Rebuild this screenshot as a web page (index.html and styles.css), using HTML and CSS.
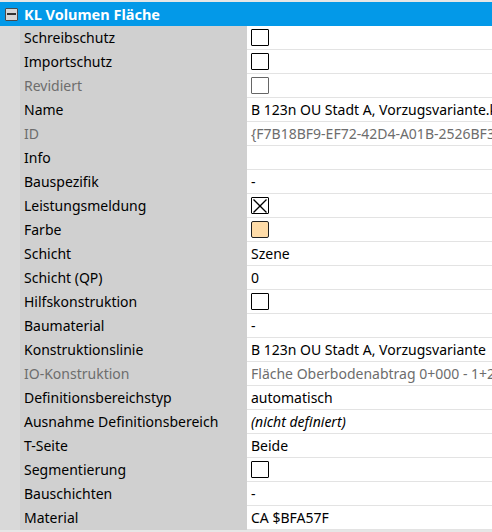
FILE: index.html
```html
<!DOCTYPE html>
<html lang="de">
<head>
<meta charset="utf-8">
<title>KL Volumen Fläche</title>
<link rel="stylesheet" href="styles.css">
</head>
<body>
<div class="grid">
  <div class="header">
    <span class="collapse"><span class="bar"></span></span>
    <span class="title">KL Volumen Fläche</span>
  </div>
  <div class="rows">
    <div class="row"><div class="gut"></div><div class="lab">Schreibschutz</div><div class="val"><span class="cb"></span></div></div>
    <div class="row"><div class="gut"></div><div class="lab">Importschutz</div><div class="val"><span class="cb"></span></div></div>
    <div class="row"><div class="gut"></div><div class="lab dim">Revidiert</div><div class="val"><span class="cb dimcb"></span></div></div>
    <div class="row"><div class="gut"></div><div class="lab">Name</div><div class="val"><span class="txt">B 123n OU Stadt A, Vorzugsvariante.km</span></div></div>
    <div class="row"><div class="gut"></div><div class="lab dim">ID</div><div class="val dim"><span class="txt">{F7B18BF9-EF72-42D4-A01B-2526BF3C91D0}</span></div></div>
    <div class="row"><div class="gut"></div><div class="lab">Info</div><div class="val"></div></div>
    <div class="row"><div class="gut"></div><div class="lab">Bauspezifik</div><div class="val"><span class="txt">-</span></div></div>
    <div class="row"><div class="gut"></div><div class="lab">Leistungsmeldung</div><div class="val"><span class="cb"><svg viewBox="0 0 14 14" width="14" height="14"><path d="M0.5 0.5 L13.5 13.5 M13.5 0.5 L0.5 13.5" stroke="#000" stroke-width="1.3" fill="none"/></svg></span></div></div>
    <div class="row"><div class="gut"></div><div class="lab">Farbe</div><div class="val"><span class="cb swatch"></span></div></div>
    <div class="row"><div class="gut"></div><div class="lab">Schicht</div><div class="val"><span class="txt">Szene</span></div></div>
    <div class="row"><div class="gut"></div><div class="lab">Schicht (QP)</div><div class="val"><span class="txt">0</span></div></div>
    <div class="row"><div class="gut"></div><div class="lab">Hilfskonstruktion</div><div class="val"><span class="cb"></span></div></div>
    <div class="row"><div class="gut"></div><div class="lab">Baumaterial</div><div class="val"><span class="txt">-</span></div></div>
    <div class="row"><div class="gut"></div><div class="lab">Konstruktionslinie</div><div class="val"><span class="txt">B 123n OU Stadt A, Vorzugsvariante</span></div></div>
    <div class="row"><div class="gut"></div><div class="lab dim">IO-Konstruktion</div><div class="val dim"><span class="txt">Fläche Oberbodenabtrag 0+000 - 1+250</span></div></div>
    <div class="row"><div class="gut"></div><div class="lab">Definitionsbereichstyp</div><div class="val"><span class="txt">automatisch</span></div></div>
    <div class="row"><div class="gut"></div><div class="lab">Ausnahme Definitionsbereich</div><div class="val"><em class="txt">(nicht definiert)</em></div></div>
    <div class="row"><div class="gut"></div><div class="lab">T-Seite</div><div class="val"><span class="txt">Beide</span></div></div>
    <div class="row"><div class="gut"></div><div class="lab">Segmentierung</div><div class="val"><span class="cb"></span></div></div>
    <div class="row"><div class="gut"></div><div class="lab">Bauschichten</div><div class="val"><span class="txt">-</span></div></div>
    <div class="row"><div class="gut"></div><div class="lab">Material</div><div class="val"><span class="txt">CA $BFA57F</span></div></div>
  </div>
</div>
</body>
</html>
```
FILE: styles.css
```css
html, body {
  margin: 0;
  padding: 0;
  background: #e6e6e6;
}
body {
  width: 492px;
  height: 532px;
  overflow: hidden;
  font-family: "Noto Sans", "Open Sans", sans-serif;
  font-size: 14px;
  color: #000;
}
.grid {
  padding-top: 2px;
}
.header {
  height: 24px;
  background: #0399e8;
  display: flex;
  align-items: center;
  gap: 6px;
  padding-left: 5px;
}
.collapse {
  width: 13px;
  height: 13px;
  box-sizing: border-box;
  border: 1px solid #4a4a4a;
  border-radius: 1px;
  background: #d6d6d6;
  display: flex;
  align-items: center;
  justify-content: center;
}
.bar {
  width: 9px;
  height: 2px;
  background: #333;
}
.title {
  color: #fff;
  font-weight: bold;
  font-size: 14.5px;
  white-space: nowrap;
  padding-bottom: 1px;
}
.row {
  display: grid;
  grid-template-columns: 20px 227px 1fr;
  height: 24px;
}
.gut {
  background: #d9d9d9;
}
.lab {
  background: #d0d0d0;
  padding-left: 4px;
  padding-bottom: 2px;
  display: flex;
  align-items: center;
  white-space: nowrap;
  overflow: hidden;
}
.val {
  background: #fff;
  border-bottom: 1px solid #e3e3e3;
  padding-left: 4px;
  display: flex;
  align-items: center;
  white-space: nowrap;
  overflow: hidden;
}
.txt {
  padding-bottom: 1px;
}
.dim {
  color: #6d6d6d;
}
.cb {
  width: 18px;
  height: 17px;
  box-sizing: border-box;
  border: 1.5px solid #000;
  border-radius: 1px;
  background: #fff;
  display: flex;
  align-items: center;
  justify-content: center;
  flex: none;
}
.dimcb {
  border-color: #666;
}
.swatch {
  background: #ffdca8;
  border-width: 1px;
  border-color: #222;
  border-radius: 2px;
}
em {
  font-style: italic;
}
```
